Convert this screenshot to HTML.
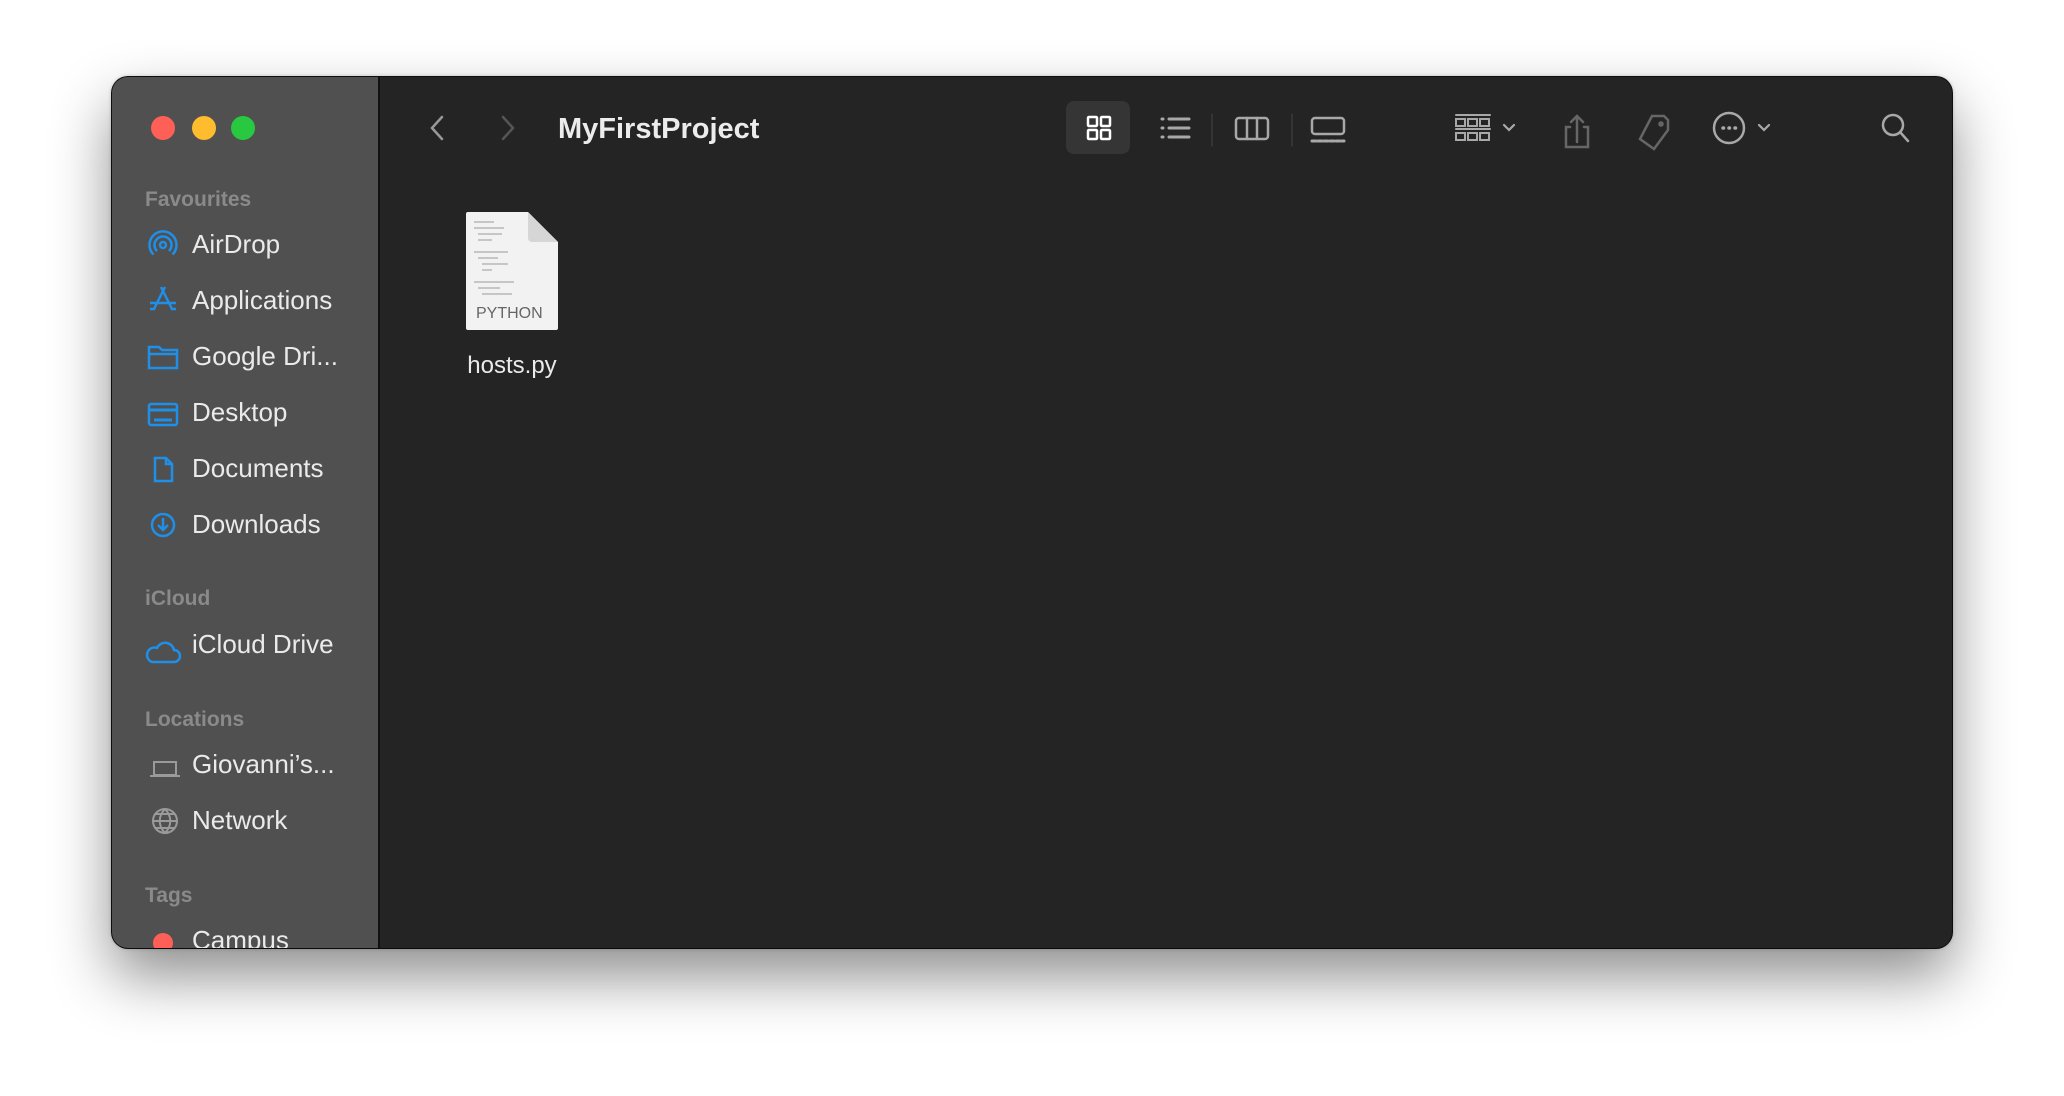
<!DOCTYPE html>
<html><head><meta charset="utf-8"><style>
*{margin:0;padding:0;box-sizing:border-box}
body{width:2064px;height:1096px;background:#fff;position:relative;overflow:hidden;font-family:"Liberation Sans",sans-serif}
.win{position:absolute;left:112px;top:77px;width:1840px;height:871px;border-radius:16px;background:#242424;overflow:hidden;box-shadow:0 28px 60px rgba(0,0,0,.45),0 0 0 1px #111,0 0 4px rgba(0,0,0,.3)}
.side{position:absolute;left:0;top:0;width:268px;height:100%;background:#505050;border-right:2px solid #111}
.a{position:absolute}
.dot{position:absolute;width:24px;height:24px;border-radius:50%;top:39px}
.h{position:absolute;left:33px;color:#8a8a8a;font-size:21px;font-weight:bold}
.it{position:absolute;left:80px;color:#eaeaea;font-size:26px;line-height:30px}
svg{overflow:visible}
</style></head><body>
<div class="win">
<div class="side">
<div class="dot" style="left:39px;background:#fe5f57"></div>
<div class="dot" style="left:80px;background:#febc2e"></div>
<div class="dot" style="left:119px;background:#28c840"></div>
<div class="h" style="top:111px">Favourites</div>
<div class="it" style="top:152px">AirDrop</div>
<div class="it" style="top:208px">Applications</div>
<div class="it" style="top:264px">Google Dri...</div>
<div class="it" style="top:320px">Desktop</div>
<div class="it" style="top:376px">Documents</div>
<div class="it" style="top:432px">Downloads</div>
<div class="h" style="top:510px">iCloud</div>
<div class="it" style="top:552px">iCloud Drive</div>
<div class="h" style="top:631px">Locations</div>
<div class="it" style="top:672px">Giovanni’s...</div>
<div class="it" style="top:728px">Network</div>
<div class="h" style="top:807px">Tags</div>
<div class="it" style="top:848px">Campus</div>
<svg class="a" style="left:0;top:0" width="268" height="871" fill="none" stroke="#1f8fe8" stroke-width="2.5">
<g transform="translate(51,168)"><circle r="3"/><path d="M-6 6A8.5 8.5 0 1 1 6 6M-9.5 9.5A13.5 13.5 0 1 1 9.5 9.5"/></g>
<g transform="translate(51,222)"><path d="M-2-12L9 10M2-12L-9 10M-13 4H13M-13 10h5M8 10h5"/></g>
<path d="M37 270h10l3 3h15v18H37z M37 277h28"/>
<rect x="37" y="327" width="28" height="21" rx="2"/><path d="M37 333h28M42 343h18" stroke-width="3"/>
<path d="M43 381h11l6 6v17H43z M54 381v6h6"/>
<circle cx="51" cy="448" r="11"/><path d="M51 441v12M46 448l5 5 5-5"/>
<path d="M40 585h22a6 6 0 0 0 0-12 9 9 0 0 0-17-2 7 7 0 0 0-5 14z"/>
<g stroke="#9a9a9a" stroke-width="2"><rect x="42" y="685" width="22" height="13"/><path d="M38 699h30"/>
<circle cx="53" cy="744" r="12"/><path d="M41 744h24M53 732c-7 7-7 17 0 24c7-7 7-17 0-24M43 737h20M43 751h20"/></g>
<circle cx="51" cy="866" r="10" fill="#fe5f57" stroke="none"/>
</svg>
</div>
<div class="a" style="left:446px;top:36px;color:#ececec;font-size:29px;font-weight:bold">MyFirstProject</div>
<div class="a" style="left:954px;top:24px;width:64px;height:53px;border-radius:8px;background:#353535"></div>
<svg class="a" style="left:0;top:0" width="1840" height="200" fill="none" stroke="#a8a8a8" stroke-width="2.5" stroke-linecap="round">
<path d="M330 40l-10 11 10 11" stroke="#999"/>
<path d="M391 40l10 11-10 11" stroke="#555"/>
<g stroke="#fff"><rect x="976" y="40" width="9" height="9" rx="1"/><rect x="989" y="40" width="9" height="9" rx="1"/><rect x="976" y="53" width="9" height="9" rx="1"/><rect x="989" y="53" width="9" height="9" rx="1"/></g>
<path d="M1050 42h1M1050 51h1M1050 60h1M1057 42h20M1057 51h20M1057 60h20" stroke-width="3"/>
<path d="M1100 37v32M1180 37v32" stroke="#3a3a3a" stroke-width="1.5"/>
<rect x="1124" y="41" width="32" height="21" rx="3"/><path d="M1135 41v21M1145 41v21"/>
<rect x="1200" y="41" width="32" height="16" rx="3"/><path d="M1200 64h32" stroke-dasharray="4 2" stroke-width="3"/>
<g stroke-width="2"><path d="M1344 38h34M1344 52h34"/>
<rect x="1344" y="42" width="9" height="7"/><rect x="1356" y="42" width="9" height="7"/><rect x="1368" y="42" width="9" height="7"/>
<rect x="1344" y="56" width="9" height="7"/><rect x="1356" y="56" width="9" height="7"/><rect x="1368" y="56" width="9" height="7"/></g>
<path d="M1392 48l5 5 5-5" stroke-width="2.2"/>
<g stroke="#666"><path d="M1465 39v26M1459 45l6-6 6 6M1458 50h-4v20h22V50h-4"/>
<path d="M1540 39h12l4 4v10l-14 19-14-10z"/><circle cx="1549" cy="47" r="1.5"/></g>
<circle cx="1617" cy="51" r="15"/><path d="M1611 51h.5M1617 51h.5M1623 51h.5" stroke-width="3.5"/>
<path d="M1647 48l5 5 5-5" stroke-width="2.2"/>
<circle cx="1781" cy="48" r="10"/><path d="M1788 55l8 9"/>
</svg>
<div class="a" style="left:354px;top:135px;width:92px;height:118px">
<svg width="92" height="118"><path d="M2 0h60l30 30v86a2 2 0 0 1-2 2H2a2 2 0 0 1-2-2V2a2 2 0 0 1 2-2z" fill="#f2f2f2"/><path d="M62 0v26a4 4 0 0 0 4 4h26z" fill="#d6d6d6"/>
<g stroke="#999" stroke-width="1"><path d="M8 10h20M8 16h30M12 22h24M12 28h14M8 40h34M12 46h20M16 52h26M16 58h10M8 70h40M12 76h22M16 82h30"/></g></svg>
<div class="a" style="left:10px;top:93px;color:#666;font-size:16px">PYTHON</div>
</div>
<div class="a" style="left:350px;top:275px;width:100px;text-align:center;color:#eaeaea;font-size:24px">hosts.py</div>
</div>
</body></html>
